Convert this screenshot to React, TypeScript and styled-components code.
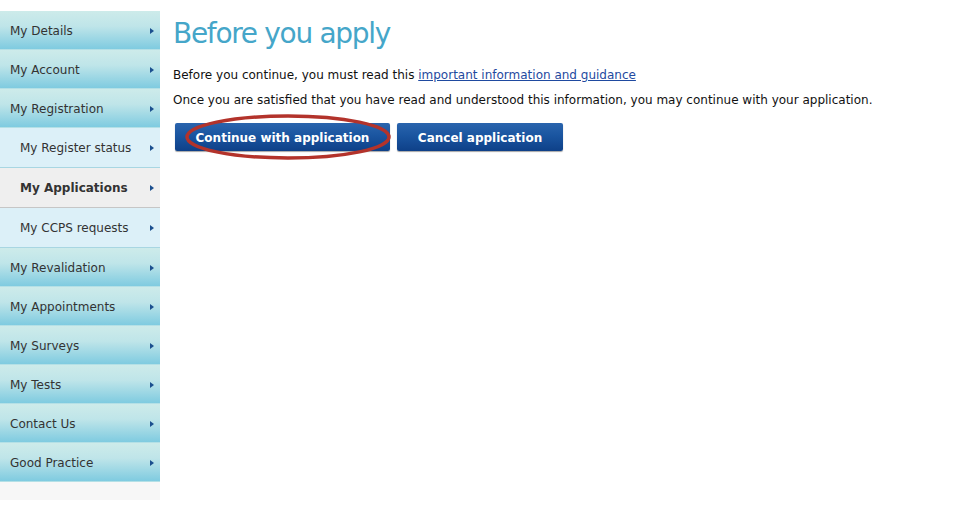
import React from "react";
import styled, { createGlobalStyle, css } from "styled-components";

const Global = createGlobalStyle`
  html, body { margin: 0; padding: 0; background: #fff; }
  body { font-family: "DejaVu Sans", Verdana, sans-serif; color: #000; }
`;

const Page = styled.div`
  display: flex;
  align-items: flex-start;
  padding-top: 11px;
  gap: 13px;
`;

const Sidebar = styled.nav`
  width: 160px;
  flex: none;
  display: flex;
  flex-direction: column;
  background: #f7f7f7;
  padding-bottom: 18px;
`;

type Kind = "top" | "sub" | "active";

const Item = styled.a<{ $kind: Kind }>`
  display: flex;
  align-items: center;
  justify-content: space-between;
  box-sizing: border-box;
  height: ${(p) => (p.$kind === "top" ? "39px" : "40px")};
  padding: ${(p) => (p.$kind === "top" ? "2px 6px 0 10px" : "0 6px 0 20px")};
  font-size: 12px;
  color: #333;
  text-decoration: none;
  ${(p) =>
    p.$kind === "top" &&
    css`
      background: linear-gradient(to bottom, #cdebea 0%, #bfe5e9 40%, #7fcbe0 100%);
      border-bottom: 1px solid #b4e0e6;
    `}
  ${(p) =>
    p.$kind === "sub" &&
    css`
      background: #dcf0f8;
      border-bottom: 1px solid #a8d6e2;
    `}
  ${(p) =>
    p.$kind === "active" &&
    css`
      background: #efefef;
      border-bottom: 1px solid #c6c6c6;
      font-weight: bold;
    `}
`;

const Arrow = styled.span`
  width: 0;
  height: 0;
  border-top: 3px solid transparent;
  border-bottom: 3px solid transparent;
  border-left: 4px solid #1b4f8e;
`;

const Main = styled.main`
  display: flex;
  flex-direction: column;
`;

const Title = styled.h1`
  margin: 5px 0 0 0;
  font-family: Tahoma, "DejaVu Sans", sans-serif;
  font-weight: normal;
  font-size: 28px;
  line-height: 36px;
  color: #45a6c9;
  letter-spacing: -1.3px;
`;

const Para = styled.p`
  margin: 0;
  font-size: 12px;
  line-height: 15px;
  color: #111;
`;

const Paras = styled.div`
  display: flex;
  flex-direction: column;
  gap: 10px;
  margin-top: 16px;
`;

const Link = styled.a`
  color: #1f4aa0;
  text-decoration: underline;
`;

const Buttons = styled.div`
  display: flex;
  gap: 7px;
  margin-top: 15px;
  margin-left: 2px;
`;

const ButtonWrap = styled.div`
  position: relative;
`;

const Button = styled.button<{ $w: number }>`
  width: ${(p) => p.$w}px;
  height: 28px;
  border: none;
  border-radius: 2px;
  background: linear-gradient(to bottom, #2a64ad 0%, #1a55a0 45%, #0e4088 100%);
  box-shadow: 0 1px 1px rgba(0, 0, 0, 0.35);
  color: #fff;
  font-family: "DejaVu Sans", Verdana, sans-serif;
  font-weight: bold;
  font-size: 12px;
  padding: 2px 0 0 0;
  cursor: pointer;
`;

const Ellipse = styled.svg`
  position: absolute;
  left: 9px;
  top: -10px;
  pointer-events: none;
`;

const menu: { label: string; kind: Kind }[] = [
  { label: "My Details", kind: "top" },
  { label: "My Account", kind: "top" },
  { label: "My Registration", kind: "top" },
  { label: "My Register status", kind: "sub" },
  { label: "My Applications", kind: "active" },
  { label: "My CCPS requests", kind: "sub" },
  { label: "My Revalidation", kind: "top" },
  { label: "My Appointments", kind: "top" },
  { label: "My Surveys", kind: "top" },
  { label: "My Tests", kind: "top" },
  { label: "Contact Us", kind: "top" },
  { label: "Good Practice", kind: "top" },
];

export default function App() {
  return (
    <>
      <Global />
      <Page>
        <Sidebar>
          {menu.map((m) => (
            <Item key={m.label} $kind={m.kind} href="#">
              <span>{m.label}</span>
              <Arrow />
            </Item>
          ))}
        </Sidebar>
        <Main>
          <Title>Before you apply</Title>
          <Paras>
            <Para>
              Before you continue, you must read this{" "}
              <Link href="#">important information and guidance</Link>
            </Para>
            <Para>
              Once you are satisfied that you have read and understood this information, you may
              continue with your application.
            </Para>
          </Paras>
          <Buttons>
            <ButtonWrap>
              <Button $w={215}>Continue with application</Button>
              <Ellipse width="208" height="48" viewBox="0 0 208 48">
                <ellipse cx="104" cy="24" rx="101" ry="21" fill="none" stroke="#b3332b" strokeWidth="3.5" />
              </Ellipse>
            </ButtonWrap>
            <Button $w={166}>Cancel application</Button>
          </Buttons>
        </Main>
      </Page>
    </>
  );
}
